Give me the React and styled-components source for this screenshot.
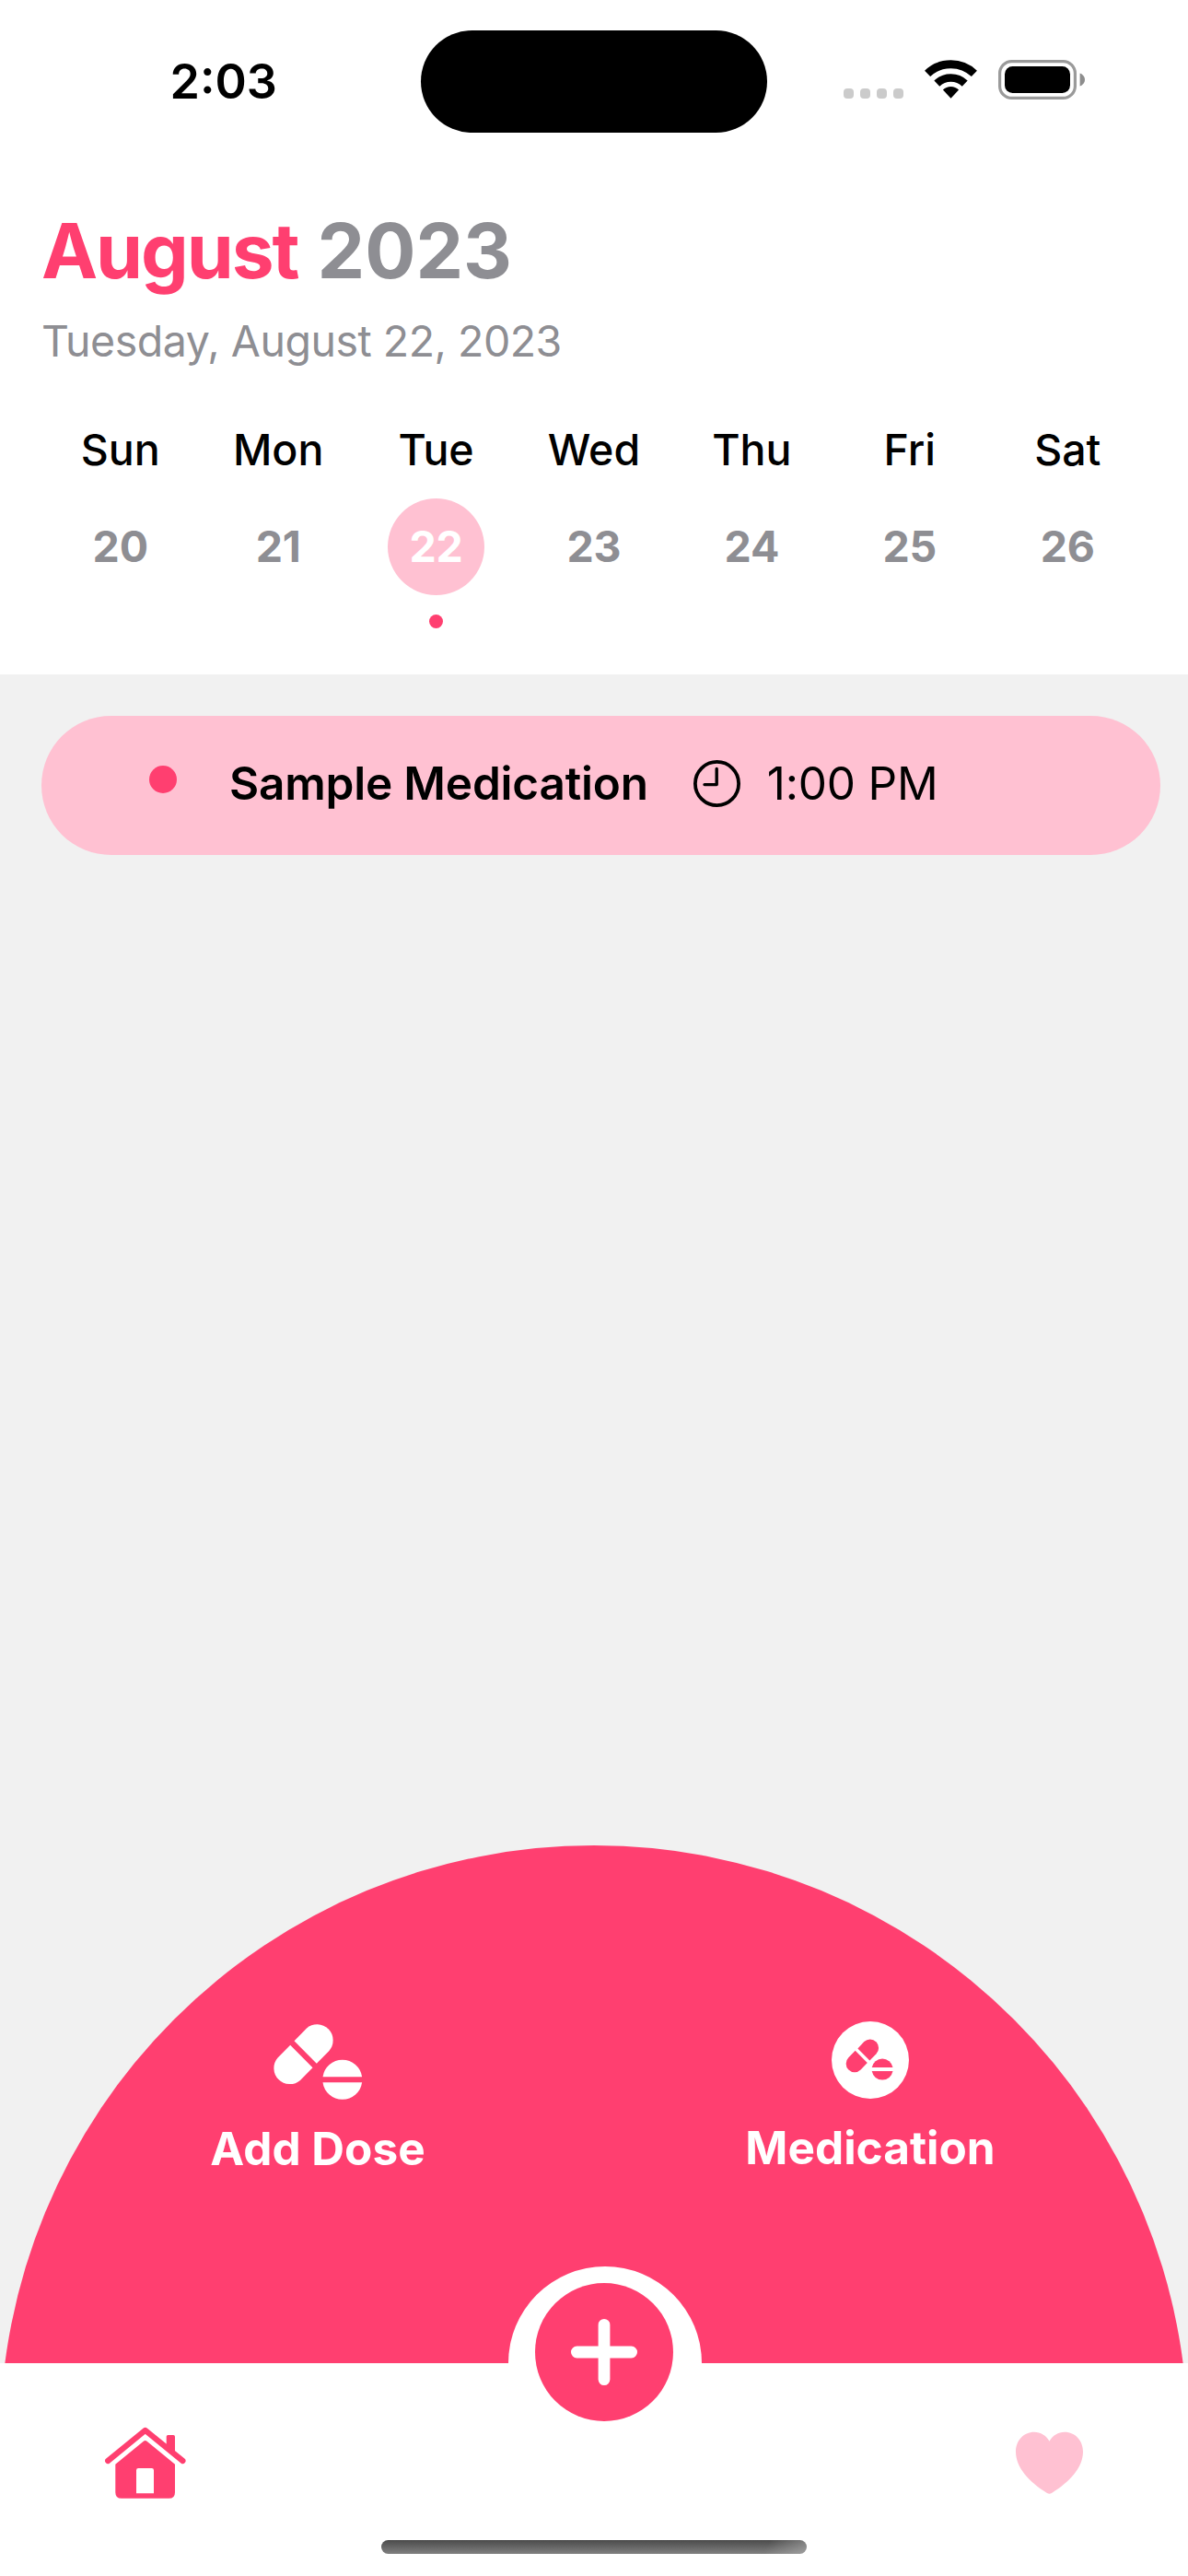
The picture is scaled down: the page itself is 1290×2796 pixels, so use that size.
import React from 'react';
import styled, { createGlobalStyle } from 'styled-components';

const color = {
  pink: '#ff3f70',
  blush: '#ffc1d2',
  gray: '#8e8e93',
  canvas: '#f1f1f1',
};

const GlobalStyle = createGlobalStyle`
  body {
    margin: 0;
    background: #fff;
    font-family: Inter, "Liberation Sans", sans-serif;
  }
  svg { display: block; }
  button {
    border: 0;
    padding: 0;
    background: none;
    font: inherit;
    color: inherit;
  }
`;

const Screen = styled.div`
  width: 1290px;
  height: 2796px;
  display: flex;
  flex-direction: column;
  overflow: hidden;
  background: #fff;
`;

/* ---------- status bar ---------- */

const StatusBar = styled.div`
  height: 177px;
  flex: none;
  box-sizing: border-box;
  padding: 0 111px 0 184.5px;
  display: grid;
  grid-template-columns: 272.5px 376px 1fr;
  align-items: center;
  color: #000;
`;

const Clock = styled.span`
  font-size: 52px;
  font-weight: 600;
  line-height: 60px;
`;

const Island = styled.div`
  height: 111px;
  border-radius: 56px;
  background: #000;
`;

const StatusIcons = styled.div`
  height: 43px;
  padding-bottom: 4px;
  display: flex;
  align-items: flex-start;
  justify-content: flex-end;
  gap: 23px;
`;

const Signal = styled.div`
  display: flex;
  gap: 7px;
  padding-top: 31px;
`;

const SignalDot = styled.i`
  width: 11px;
  height: 11px;
  border-radius: 4px;
  background: #cbcbcb;
`;

/* ---------- calendar header ---------- */

const Header = styled.header`
  flex: none;
  height: 555px;
  box-sizing: border-box;
  padding: 46px 45px 0;
`;

const Title = styled.h1`
  margin: 0;
  display: flex;
  gap: 21px;
  font-size: 82px;
  font-weight: 700;
  line-height: 100px;
  color: ${color.gray};
`;

const Month = styled.span`
  color: ${color.pink};
  letter-spacing: -2.1px;
`;

const Subtitle = styled.p`
  margin: 19px 0 0;
  font-size: 46.5px;
  line-height: 56px;
  letter-spacing: -0.49px;
  color: ${color.gray};
`;

const Week = styled.div`
  margin-top: 62px;
  display: grid;
  grid-template-columns: repeat(7, 1fr);
`;

const Day = styled.div`
  display: flex;
  flex-direction: column;
  align-items: center;
`;

const DayName = styled.span`
  font-size: 46.5px;
  font-weight: 500;
  line-height: 56px;
  color: #000;
`;

const DayNumber = styled.span`
  margin-top: 25px;
  width: 105px;
  height: 105px;
  border-radius: 50%;
  text-align: center;
  font-size: 46.5px;
  font-weight: 700;
  line-height: 105px;
  letter-spacing: -0.2px;
  color: ${(p) => (p.$selected ? '#fff' : color.gray)};
  background: ${(p) => (p.$selected ? color.blush : 'transparent')};
`;

const Dot = styled.i`
  flex: none;
  width: ${(p) => p.$size}px;
  height: ${(p) => p.$size}px;
  border-radius: 50%;
  background: ${color.pink};
`;

const DayMarker = styled(Dot)`
  margin-top: 21px;
`;

/* ---------- doses ---------- */

const Content = styled.main`
  flex: 1;
  display: flex;
  flex-direction: column;
  justify-content: space-between;
  background: ${color.canvas};
`;

const DoseCard = styled.div`
  margin: 45px 30px 0 45px;
  height: 151px;
  box-sizing: border-box;
  padding: 0 0 4px 117px;
  border-radius: 76px;
  display: flex;
  align-items: center;
  background: ${color.blush};
  color: #000;
`;

const DoseDot = styled(Dot)`
  margin: 0 57px 9px 0;
`;

const DoseName = styled.span`
  margin: 0 49px 2px 0;
  font-size: 49.5px;
  font-weight: 600;
  line-height: 60px;
  letter-spacing: -0.2px;
`;

const DoseTime = styled.span`
  margin: 0 0 2px 29px;
  font-size: 49.5px;
  line-height: 60px;
  letter-spacing: -0.2px;
`;

/* ---------- fan menu ---------- */

const Fan = styled.div`
  position: relative;
  height: 562px;
  box-sizing: border-box;
  padding: 191px 195px 0 195px;
  display: flex;
  justify-content: space-between;
  align-items: flex-start;
  overflow: hidden;
  color: #fff;

  &::before {
    content: '';
    position: absolute;
    top: 0;
    left: 0;
    width: 1290px;
    height: 1290px;
    border-radius: 50%;
    background: ${color.pink};
  }
`;

const Action = styled.button`
  position: relative;
  width: 300px;
  padding-top: ${(p) => p.$drop || 0}px;
  display: flex;
  flex-direction: column;
  align-items: center;
  gap: 23px;
  font-size: 49.5px;
  font-weight: 650;
  line-height: 60px;
  white-space: nowrap;
`;

/* ---------- tab bar ---------- */

const TabBar = styled.nav`
  position: relative;
  flex: none;
  height: 231px;
  box-sizing: border-box;
  padding: 69px 114px 24px 113px;
  display: flex;
  flex-direction: column;
  justify-content: space-between;
  background: #fff;
`;

const Tabs = styled.div`
  display: flex;
  justify-content: space-between;
  align-items: center;
`;

const FabRing = styled.div`
  position: absolute;
  top: -105px;
  left: 552px;
  width: 210px;
  height: 210px;
  box-sizing: border-box;
  padding: 18px 0 0 29px;
  border-radius: 50%;
  background: #fff;
`;

const Fab = styled.button`
  width: 150px;
  height: 150px;
  border-radius: 50%;
  display: grid;
  place-items: center;
  background: ${color.pink};
`;

const HomeIndicator = styled.div`
  width: 462px;
  height: 15px;
  margin-left: 301px;
  border-radius: 8px;
  background:
    linear-gradient(115deg, transparent 90%, rgba(190, 190, 190, 0.5) 100%),
    linear-gradient(#4b4b4b, #808080);
`;

/* ---------- icons ---------- */

const WifiIcon = () => (
  <svg width="57" height="43" viewBox="0 0 57 43" fill="none" stroke="#000">
    <path d="M3.1 14.9A36.8 36.8 0 0 1 53.9 14.9" strokeWidth="8.8" />
    <path d="M13.3 25.6A22 22 0 0 1 43.7 25.6" strokeWidth="8.6" />
    <path d="M19.9 32.6A12.3 12.3 0 0 1 37.1 32.6L28.5 41.8Z" fill="#000" stroke="none" />
  </svg>
);

const BatteryIcon = () => (
  <svg width="95" height="43" viewBox="0 0 95 43">
    <rect x="1.6" y="1.6" width="81.8" height="39.8" rx="13" fill="none" stroke="#9a9a9a" strokeWidth="3.2" />
    <rect x="7" y="7" width="71" height="29" rx="8.5" fill="#000" />
    <path d="M88.6 14.5C91.8 15.6 94 18.4 94 21.5C94 24.6 91.8 27.4 88.6 28.5Z" fill="#8d8d8d" />
  </svg>
);

const ClockIcon = () => (
  <svg width="51" height="51" viewBox="0 0 51 51" fill="none" stroke="#000" strokeWidth="3.4" strokeLinecap="round" strokeLinejoin="round">
    <circle cx="25.5" cy="25.5" r="23.6" strokeWidth="3.8" />
    <path d="M25.2 9.5V26.6H12" />
  </svg>
);

const PillsIcon = () => (
  <svg width="98" height="84" viewBox="0.5 0 98 84" fill="#fff">
    <path d="M24 20.3L37.5 6.5A17.3 17.3 0 0 1 61.9 30.9L48.3 44.7Z" />
    <path d="M19.7 24.7L6.1 38.5A17.3 17.3 0 0 0 30.5 62.9L44 49.3Z" />
    <path d="M55 59.3A21.5 21.5 0 0 1 97.6 59.3Z" />
    <path d="M55 65.2A21.5 21.5 0 0 0 97.6 65.2Z" />
  </svg>
);

const PillsCircleIcon = () => (
  <svg width="84" height="84" viewBox="0 0 84 84" fill={color.pink}>
    <circle cx="42" cy="42" r="42" fill="#fff" />
    <path d="M28.4 29.4L35.3 22.1A9.3 9.3 0 0 1 48.5 35.2L41.4 42.4Z" />
    <path d="M25.7 31.8L18.4 39.3A9.3 9.3 0 0 0 31.6 52.5L38.8 45Z" />
    <path d="M43.7 50A11.6 11.6 0 0 1 66.5 50Z" />
    <path d="M43.7 54.1A11.6 11.6 0 0 0 66.5 54.1Z" />
  </svg>
);

const PlusIcon = () => (
  <svg width="72" height="72" viewBox="0 0 72 72" stroke="#fff" strokeWidth="12.8" strokeLinecap="round">
    <path d="M36 6.4V65.6M6.4 36H65.6" />
  </svg>
);

const HouseIcon = () => (
  <svg width="90" height="79" viewBox="33 34 90 79" fill={color.pink}>
    <path d="M37.2 71L77.7 37.9L118.4 71" fill="none" stroke={color.pink} strokeWidth="6.2" strokeLinecap="round" strokeLinejoin="round" />
    <path d="M100.7 56V44.8Q100.7 43 102.5 43H108.2Q110 43 110 44.8V64Z" />
    <path
      fillRule="evenodd"
      d="M45.3 74.8L76.2 49.5Q77.7 48.4 79.2 49.5L110 74.8V105.2Q110 111.8 103.4 111.8H51.9Q45.3 111.8 45.3 105.2ZM68 106.2H87V81.2Q87 79 84.8 79H70.2Q68 79 68 81.2Z"
    />
  </svg>
);

const HeartIcon = () => (
  <svg width="73" height="69" viewBox="43 39 73 69" fill={color.blush}>
    <path d="M79.5 49.7C76 43.5 70 39.7 63 39.7C51.5 39.7 43 49 43 61C43 78 57 93.5 77 106Q79.5 107.6 82 106C102 93.5 116 78 116 61C116 49 107.5 39.7 96 39.7C89 39.7 83 43.5 79.5 49.7Z" />
  </svg>
);

const week = [
  { name: 'Sun', date: 20 },
  { name: 'Mon', date: 21 },
  { name: 'Tue', date: 22, selected: true },
  { name: 'Wed', date: 23 },
  { name: 'Thu', date: 24 },
  { name: 'Fri', date: 25 },
  { name: 'Sat', date: 26 },
];

export default function App() {
  return (
    <>
      <GlobalStyle />
      <Screen>
        <StatusBar>
          <Clock>2:03</Clock>
          <Island />
          <StatusIcons>
            <Signal>
              {[0, 1, 2, 3].map((i) => (
                <SignalDot key={i} />
              ))}
            </Signal>
            <WifiIcon />
            <BatteryIcon />
          </StatusIcons>
        </StatusBar>

        <Header>
          <Title>
            <Month>August</Month>
            <span>2023</span>
          </Title>
          <Subtitle>Tuesday, August 22, 2023</Subtitle>
          <Week>
            {week.map((day) => (
              <Day key={day.name}>
                <DayName>{day.name}</DayName>
                <DayNumber $selected={day.selected}>{day.date}</DayNumber>
                {day.selected && <DayMarker $size={15} />}
              </Day>
            ))}
          </Week>
        </Header>

        <Content>
          <DoseCard>
            <DoseDot $size={30} />
            <DoseName>Sample Medication</DoseName>
            <ClockIcon />
            <DoseTime>1:00 PM</DoseTime>
          </DoseCard>
          <Fan>
            <Action $drop={1}>
              <PillsIcon />
              Add Dose
            </Action>
            <Action>
              <PillsCircleIcon />
              Medication
            </Action>
          </Fan>
        </Content>

        <TabBar>
          <Tabs>
            <HouseIcon />
            <HeartIcon />
          </Tabs>
          <HomeIndicator />
          <FabRing>
            <Fab aria-label="Add">
              <PlusIcon />
            </Fab>
          </FabRing>
        </TabBar>
      </Screen>
    </>
  );
}
